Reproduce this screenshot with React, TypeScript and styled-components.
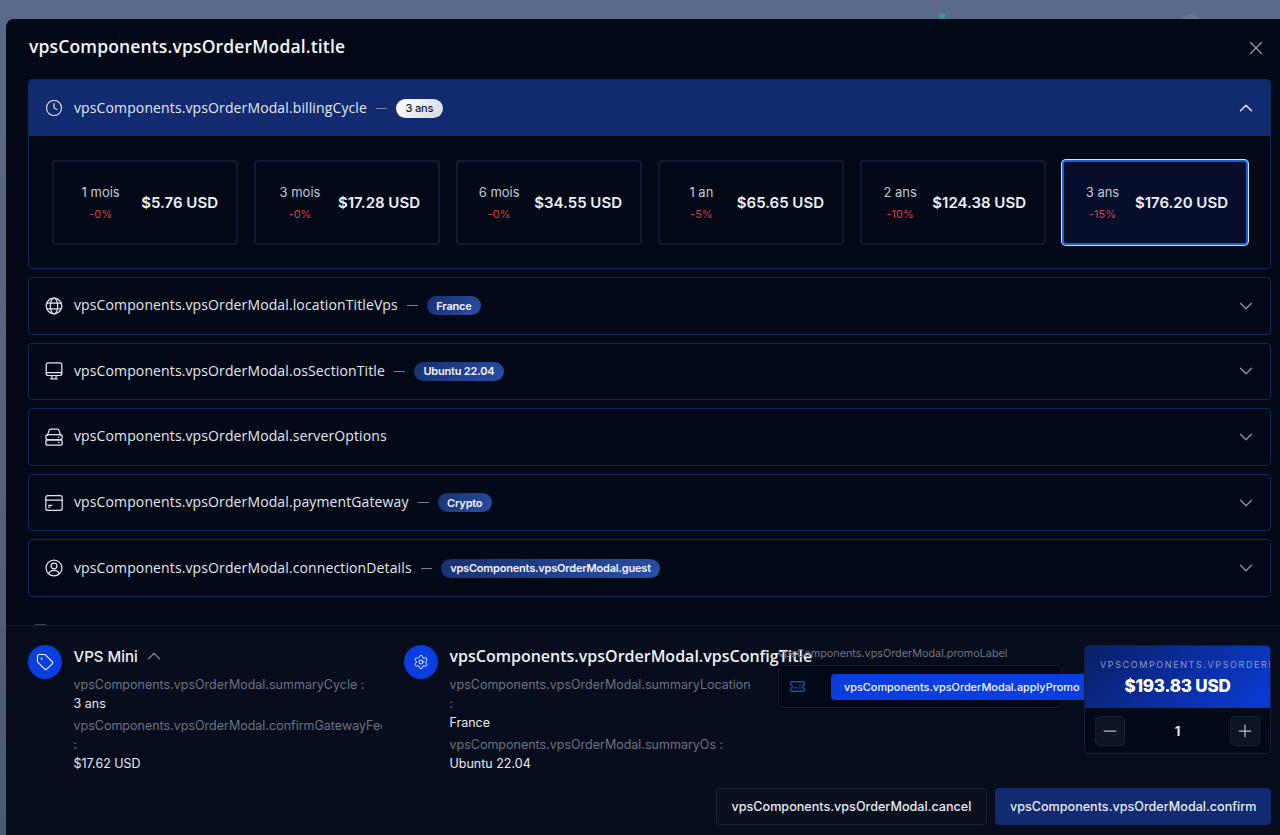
import styled, { createGlobalStyle } from 'styled-components'
import { ChevronDown, ChevronUp, Clock, Minus, Plus, Settings, Tag, X } from 'lucide-react'

const prefix = 'vpsComponents.vpsOrderModal.'

const cycles = [
    { label: '1 mois', discount: '-0%', price: '$5.76 USD' },
    { label: '3 mois', discount: '-0%', price: '$17.28 USD' },
    { label: '6 mois', discount: '-0%', price: '$34.55 USD' },
    { label: '1 an', discount: '-5%', price: '$65.65 USD' },
    { label: '2 ans', discount: '-10%', price: '$124.38 USD' },
    { label: '3 ans', discount: '-15%', price: '$176.20 USD', selected: true },
]

function GlobeIcon() {
    return (
        <IconSld viewBox="1 1 22 22">
            <circle cx="12" cy="12" r="9.5" />
            <ellipse cx="12" cy="12" rx="4.5" ry="9.5" />
            <path d="M3.4 8.5h17.2M3.4 15.5h17.2" />
        </IconSld>
    )
}

function MonitorIcon() {
    return (
        <IconSld viewBox="1 1 22 22">
            <rect x="2.5" y="2" width="19" height="15.500" rx="2.5" />
            <path d="M2.5 14h19M9.5 17.5v4M14.500 17.5v4M8 21.500h8" />
        </IconSld>
    )
}

function ServerIcon() {
    return (
        <IconSld viewBox="1 1 22 22">
            <path d="M4 10l1.600-5.200A3 3 0 0 1 8.500 2.500h7a3 3 0 0 1 2.900 2.300L20 10" />
            <rect x="2" y="9" width="20" height="6.500" rx="2.500" />
            <rect x="2" y="15.500" width="20" height="6.500" rx="2.500" />
            <path d="M17.500 12.200h.6M17.500 18.700h.6" />
        </IconSld>
    )
}

function CardIcon() {
    return (
        <IconSld viewBox="1 1 22 22">
            <rect x="2" y="3" width="20" height="18" rx="2.500" />
            <path d="M2 8.500h20M5.500 15h4M5.500 17h1.500" />
        </IconSld>
    )
}

function UserIcon() {
    return (
        <IconSld viewBox="1 1 22 22">
            <circle cx="12" cy="12" r="9.700" />
            <circle cx="12" cy="9.500" r="3.500" />
            <path d="M5.500 19c1-2.800 3.400-4 6.500-4s5.500 1.200 6.500 4" />
        </IconSld>
    )
}

function TicketIcon() {
    return (
        <PromoIconSld viewBox="1 1 22 22">
            <path d="M3 5h18a1 1 0 0 1 1 1v3.500a2.500 2.500 0 0 0 0 5V18a1 1 0 0 1-1 1H3a1 1 0 0 1-1-1v-3.500a2.500 2.500 0 0 0 0-5V6a1 1 0 0 1 1-1z" />
            <path d="M7 14h5M15.500 9v1.500M15.500 13.500V15" />
        </PromoIconSld>
    )
}

const sections = [
    { icon: GlobeIcon, title: 'locationTitleVps', badge: 'France' },
    { icon: MonitorIcon, title: 'osSectionTitle', badge: 'Ubuntu 22.04' },
    { icon: ServerIcon, title: 'serverOptions' },
    { icon: CardIcon, title: 'paymentGateway', badge: 'Crypto' },
    { icon: UserIcon, title: 'connectionDetails', badge: prefix + 'guest' },
]

export default function App() {
    return (
        <>
            <GlobalStyle />
            <BackdropSld>
                <StatusDotSld />
                <AvatarPeekSld />
                <ModalSld>
                    <HeaderSld>
                        <TitleSld>{prefix}title</TitleSld>
                        <CloseSld>
                            <X size={22} strokeWidth={1.3} />
                        </CloseSld>
                    </HeaderSld>
                    <BodySld>
                        <SectionSld>
                            <SectionHeadSld $open>
                                <Clock size={18} strokeWidth={1.5} />
                                <SectionTitleSld>{prefix}billingCycle</SectionTitleSld>
                                <DashSld />
                                <BadgeSld $light>3 ans</BadgeSld>
                                <ChevronSld>
                                    <ChevronUp size={22} strokeWidth={1.5} color="#e6eaf2" />
                                </ChevronSld>
                            </SectionHeadSld>
                            <CyclesSld>
                                {cycles.map((cycle) => (
                                    <CycleSld key={cycle.label} $selected={cycle.selected}>
                                        <CycleInfoSld>
                                            <CycleLabelSld>{cycle.label}</CycleLabelSld>
                                            <CycleDiscountSld>{cycle.discount}</CycleDiscountSld>
                                        </CycleInfoSld>
                                        <CyclePriceSld>{cycle.price}</CyclePriceSld>
                                    </CycleSld>
                                ))}
                            </CyclesSld>
                        </SectionSld>
                        {sections.map((section) => (
                            <SectionSld key={section.title}>
                                <SectionHeadSld>
                                    <section.icon />
                                    <SectionTitleSld>{prefix + section.title}</SectionTitleSld>
                                    {section.badge && <DashSld />}
                                    {section.badge && <BadgeSld>{section.badge}</BadgeSld>}
                                    <ChevronSld>
                                        <ChevronDown size={22} strokeWidth={1.5} />
                                    </ChevronSld>
                                </SectionHeadSld>
                            </SectionSld>
                        ))}
                        <TermsPeekSld />
                    </BodySld>
                    <FooterSld>
                        <SummaryRowSld>
                            <SummarySld>
                                <RoundIconSld>
                                    <Tag size={18} strokeWidth={1.5} />
                                </RoundIconSld>
                                <SummaryTextSld>
                                    <PlanSld>
                                        VPS Mini
                                        <ChevronUp size={22} strokeWidth={1.3} color="#7b8394" />
                                    </PlanSld>
                                    <KeySld>{prefix}summaryCycle :</KeySld>
                                    <ValueSld>3 ans</ValueSld>
                                    <KeySld>{prefix}confirmGatewayFee :</KeySld>
                                    <ValueSld>$17.62 USD</ValueSld>
                                </SummaryTextSld>
                            </SummarySld>
                            <SummarySld>
                                <RoundIconSld>
                                    <Settings size={16} strokeWidth={1.5} />
                                </RoundIconSld>
                                <SummaryTextSld>
                                    <ConfigTitleSld>{prefix}vpsConfigTitle</ConfigTitleSld>
                                    <KeySld>{prefix}summaryLocation :</KeySld>
                                    <ValueSld>France</ValueSld>
                                    <KeySld>{prefix}summaryOs :</KeySld>
                                    <ValueSld>Ubuntu 22.04</ValueSld>
                                </SummaryTextSld>
                            </SummarySld>
                            <PromoSld>
                                <PromoLabelSld>{prefix}promoLabel</PromoLabelSld>
                                <PromoBoxSld>
                                    <TicketIcon />
                                    <ApplySld>{prefix}applyPromo</ApplySld>
                                </PromoBoxSld>
                            </PromoSld>
                            <TotalSld>
                                <TotalHeadSld>
                                    <TotalLabelSld>{prefix}total</TotalLabelSld>
                                    <TotalPriceSld>$193.83 USD</TotalPriceSld>
                                </TotalHeadSld>
                                <QuantitySld>
                                    <StepSld>
                                        <Minus size={20} strokeWidth={1.5} />
                                    </StepSld>
                                    <QuantityValueSld>1</QuantityValueSld>
                                    <StepSld>
                                        <Plus size={20} strokeWidth={1.5} />
                                    </StepSld>
                                </QuantitySld>
                            </TotalSld>
                        </SummaryRowSld>
                        <ActionsSld>
                            <CancelSld>{prefix}cancel</CancelSld>
                            <ConfirmSld>{prefix}confirm</ConfirmSld>
                        </ActionsSld>
                    </FooterSld>
                </ModalSld>
            </BackdropSld>
        </>
    )
}

const GlobalStyle = createGlobalStyle`
    html, body {
        margin: 0;
        height: 100%;
        overflow: hidden;
    }
    body {
        font-family: Inter, "Liberation Sans", sans-serif;
    }
    * {
        box-sizing: border-box;
    }
`

const BackdropSld = styled.div`
    position: relative;
    width: 1280px;
    height: 835px;
    padding: 19px 0 0 6px;
    background: linear-gradient(180deg, #5a6a8a 0, #596886 12%, #4e596f 100%);
    overflow: hidden;
`

const StatusDotSld = styled.span`
    position: absolute;
    top: 13px;
    left: 939px;
    width: 6px;
    height: 6px;
    border-radius: 50%;
    background: #3f9c8f;
`

const AvatarPeekSld = styled.span`
    position: absolute;
    top: 15px;
    left: 1182px;
    width: 18px;
    height: 12px;
    border-radius: 6px;
    background: #68789a;
`

const ModalSld = styled.div`
    position: relative;
    display: flex;
    flex-direction: column;
    width: 1274px;
    height: 816px;
    background: #030917;
    border-top-left-radius: 8px;
    overflow: hidden;
`

const HeaderSld = styled.div`
    display: flex;
    align-items: center;
    justify-content: space-between;
    height: 60px;
    padding: 0 13px 6px 23px;
`

const TitleSld = styled.h2`
    margin: 0;
    font-family: "Open Sans", sans-serif;
    font-size: 17.500px;
    font-weight: 600;
    letter-spacing: 0.15px;
    color: #f3f5f9;
`

const CloseSld = styled.div`
    display: flex;
    margin-top: 4px;
    color: #9aa1ad;
`

const BodySld = styled.div`
    display: flex;
    flex-direction: column;
    gap: 8px;
    height: 546px;
    padding: 0 9px 0 22px;
    overflow: hidden;
`

const SectionSld = styled.div`
    flex-shrink: 0;
    border: 1px solid #0f2a5c;
    border-radius: 4px;
    overflow: hidden;
`

const SectionHeadSld = styled.div<{ $open?: boolean }>`
    display: flex;
    align-items: center;
    height: ${(props) => (props.$open ? '56px' : '55.600px')};
    padding: 0 13px 0 16px;
    background: ${(props) => (props.$open ? '#112a70' : 'transparent')};
    color: #e4e7ee;
`

const IconSld = styled.svg`
    flex-shrink: 0;
    width: 18px;
    height: 18px;
    fill: none;
    stroke: #e4e7ee;
    stroke-width: 1.500;
    stroke-linecap: round;
    stroke-linejoin: round;
`

const SectionTitleSld = styled.span`
    margin: 0 0 2px 11px;
    font-family: "Open Sans", sans-serif;
    font-size: 14px;
    letter-spacing: 0.12px;
    color: #e4e7ee;
`

const DashSld = styled.span`
    width: 11px;
    height: 1px;
    margin: 0 9px;
    background: #7a8392;
`

const BadgeSld = styled.span<{ $light?: boolean }>`
    display: inline-flex;
    align-items: center;
    height: 19px;
    padding: 0 9.500px;
    border-radius: 10px;
    font-size: 11px;
    font-weight: ${(props) => (props.$light ? 500 : 600)};
    letter-spacing: -0.2px;
    color: ${(props) => (props.$light ? '#10172a' : '#f1f4fb')};
    background: ${(props) =>
        props.$light ? 'linear-gradient(135deg, #ffffff, #d5d8df)' : 'linear-gradient(135deg, #17306f, #2a4fa8)'};
`

const ChevronSld = styled.span`
    display: flex;
    margin-left: auto;
    color: #8a92a2;
`

const CyclesSld = styled.div`
    display: grid;
    grid-template-columns: repeat(6, 1fr);
    gap: 16px;
    padding: 24px 22px 23px 23px;
`

const CycleSld = styled.div<{ $selected?: boolean }>`
    display: flex;
    align-items: center;
    height: 85px;
    padding: 0 18px 0 6px;
    border-radius: 4px;
    border: ${(props) => (props.$selected ? '2px solid #1c5fd0' : '2px solid #121c33')};
    background: ${(props) => (props.$selected ? '#060e2c' : 'transparent')};
    box-shadow: ${(props) => (props.$selected ? '0 0 0 1px #cfe0ff' : 'none')};
`

const CycleInfoSld = styled.div`
    display: flex;
    flex: 1;
    flex-direction: column;
    align-items: center;
    gap: 7px;
`

const CycleLabelSld = styled.span`
    font-size: 13px;
    color: #c5c9d2;
`

const CycleDiscountSld = styled.span`
    font-size: 11px;
    color: #d9414a;
`

const CyclePriceSld = styled.span`
    font-size: 15px;
    font-weight: 600;
    color: #eef0f5;
`

const TermsPeekSld = styled.div`
    flex-shrink: 0;
    width: 13px;
    height: 14px;
    margin: 19px 0 0 6px;
    border: 1px solid #3c4352;
    border-radius: 2px;
`

const FooterSld = styled.div`
    flex: 1;
    padding: 19px 9px 0 22px;
    background: #070d1c;
    border-top: 1px solid #111a2e;
`

const SummaryRowSld = styled.div`
    display: grid;
    grid-template-columns: 354px 352px 284px 187px;
    gap: 22px;
    height: 143px;
`

const SummarySld = styled.div`
    display: flex;
    gap: 11.500px;
    min-width: 0;
`

const RoundIconSld = styled.div`
    display: flex;
    align-items: center;
    justify-content: center;
    flex-shrink: 0;
    width: 34px;
    height: 34px;
    border-radius: 50%;
    background: #0a3ee0;
    color: #f1f4fb;
`

const SummaryTextSld = styled.div`
    display: flex;
    flex-direction: column;
    min-width: 0;
    font-size: 12.500px;
    line-height: 19px;
`

const PlanSld = styled.div`
    display: flex;
    align-items: center;
    gap: 5px;
    height: 22px;
    margin-bottom: 8px;
    font-size: 15px;
    font-weight: 500;
    color: #eef0f5;
`

const ConfigTitleSld = styled.div`
    height: 22px;
    margin-bottom: 8px;
    font-family: "Open Sans", sans-serif;
    font-size: 16px;
    font-weight: 600;
    line-height: 22px;
    white-space: nowrap;
    color: #eef0f5;
`

const KeySld = styled.div`
    color: #6b7384;
    overflow: hidden;
`

const ValueSld = styled.div`
    margin-bottom: 3px;
    color: #e8eaf0;
`

const PromoSld = styled.div`
    display: flex;
    flex-direction: column;
    gap: 3px;
    min-width: 0;
`

const PromoLabelSld = styled.div`
    height: 16px;
    margin-top: 1px;
    font-size: 10.800px;
    line-height: 16px;
    white-space: nowrap;
    color: #6d7585;
`

const PromoBoxSld = styled.div`
    display: flex;
    align-items: center;
    gap: 26px;
    height: 43px;
    padding-left: 11px;
    border: 1px solid #151d30;
    border-radius: 5px;
    background: #030917;
`

const PromoIconSld = styled.svg`
    flex-shrink: 0;
    width: 15px;
    height: 15px;
    fill: none;
    stroke: #1e4e9a;
    stroke-width: 2;
    stroke-linecap: round;
    stroke-linejoin: round;
`

const ApplySld = styled.div`
    display: flex;
    align-items: center;
    flex-shrink: 0;
    height: 26px;
    padding: 0 6px 0 13px;
    border-radius: 4px 0 0 4px;
    background: #0a3ee0;
    font-size: 10.900px;
    font-weight: 500;
    color: #f1f4fb;
`

const TotalSld = styled.div`
    position: relative;
    height: 109px;
    border: 1px solid #0f2145;
    border-radius: 5px;
    background: #030917;
    overflow: hidden;
`

const TotalHeadSld = styled.div`
    display: flex;
    flex-direction: column;
    align-items: center;
    height: 62px;
    padding: 13px 0 0 15px;
    background: linear-gradient(135deg, #0a1f66, #0b3bd6);
    overflow: hidden;
`

const TotalLabelSld = styled.div`
    align-self: flex-start;
    font-size: 9px;
    letter-spacing: 1.600px;
    line-height: 12px;
    text-transform: uppercase;
    white-space: nowrap;
    color: #8b9cc8;
`

const TotalPriceSld = styled.div`
    margin: 5px 0 0 -15px;
    font-size: 17px;
    font-weight: 800;
    letter-spacing: -0.2px;
    color: #ffffff;
`

const QuantitySld = styled.div`
    display: flex;
    align-items: center;
    justify-content: space-between;
    padding: 8px 10px;
`

const StepSld = styled.div`
    display: flex;
    align-items: center;
    justify-content: center;
    width: 30px;
    height: 30px;
    border: 1px solid #1c2438;
    border-radius: 5px;
    background: #0e1424;
    color: #b5bac5;
`

const QuantityValueSld = styled.span`
    font-size: 13px;
    font-weight: 700;
    color: #e8eaf0;
`

const ActionsSld = styled.div`
    display: flex;
    justify-content: flex-end;
    gap: 8px;
`

const CancelSld = styled.button`
    height: 37px;
    padding: 0 15px;
    border: 1px solid #1a2233;
    border-radius: 4px;
    background: #0a101e;
    font-family: Inter, sans-serif;
    font-size: 12.600px;
    font-weight: 500;
    color: #e8eaf0;
`

const ConfirmSld = styled.button`
    height: 37px;
    padding: 0 14.500px;
    border: none;
    border-radius: 4px;
    background: #112a70;
    font-family: Inter, sans-serif;
    font-size: 12.600px;
    font-weight: 500;
    color: #e8eaf0;
`
